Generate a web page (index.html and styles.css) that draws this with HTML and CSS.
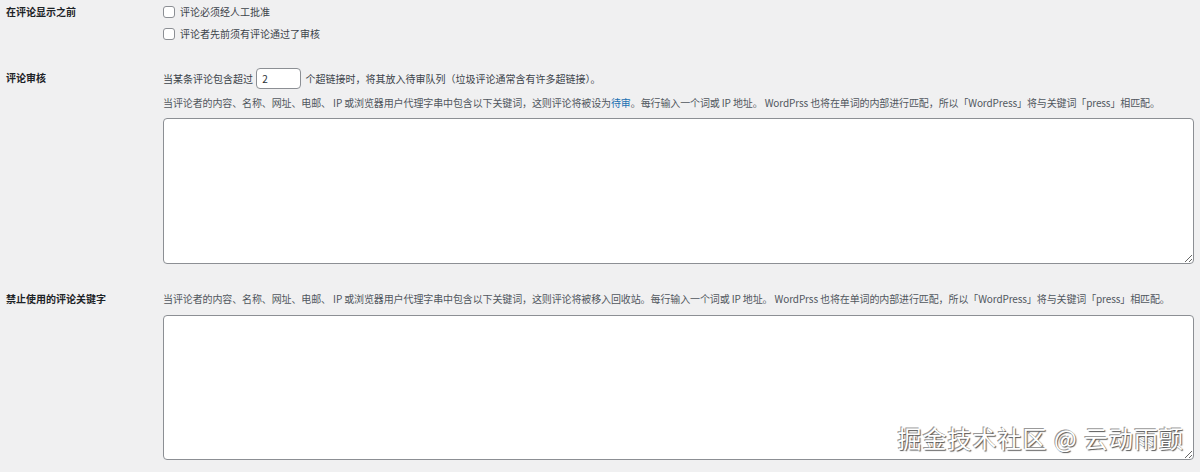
FILE: index.html
```html
<!DOCTYPE html>
<html lang="zh-CN">
<head>
    <meta charset="UTF-8">
    <meta name="viewport" content="width=device-width, initial-scale=1.0">
    <title>讨论设置</title>
    <link rel="stylesheet" href="styles.css">
</head>
<body>
    <div class="settings">
        <div class="row first">
            <div class="row-label">在评论显示之前</div>
            <div class="row-field">
                <label class="check"><input type="checkbox"> 评论必须经人工批准</label>
                <label class="check"><input type="checkbox"> 评论者先前须有评论通过了审核</label>
            </div>
        </div>

        <div class="row moderation">
            <div class="row-label">评论审核</div>
            <div class="row-field">
                <div class="line">当某条评论包含超过 <input type="text" class="small-text" value="2"> 个超链接时，将其放入待审队列（垃圾评论通常含有许多超链接）。</div>
                <p class="description">当评论者的内容、名称、网址、电邮、 IP 或浏览器用户代理字串中包含以下关键词，这则评论将被设为<a href="#">待审</a>。每行输入一个词或 IP 地址。 WordPrss 也将在单词的内部进行匹配，所以「WordPress」将与关键词「press」相匹配。</p>
                <textarea class="keys"></textarea>
            </div>
        </div>

        <div class="row disallowed">
            <div class="row-label">禁止使用的评论关键字</div>
            <div class="row-field">
                <p class="description">当评论者的内容、名称、网址、电邮、 IP 或浏览器用户代理字串中包含以下关键词，这则评论将被移入回收站。每行输入一个词或 IP 地址。 WordPrss 也将在单词的内部进行匹配，所以「WordPress」将与关键词「press」相匹配。</p>
                <textarea class="keys keys-last"></textarea>
            </div>
        </div>
    </div>

    <div class="watermark">掘金技术社区 @ 云动雨颤</div>
</body>
</html>
```

FILE: styles.css
```css
body {
    font-family: "Noto Sans CJK SC", "Noto Sans", sans-serif;
    font-size: 10px;
    color: #3c434a;
    background-color: #f0f0f1;
    margin: 0;
    padding: 0;
    position: relative;
    height: 472px;
    overflow: hidden;
}

.settings {
    padding-top: 1px;
}

.row {
    display: grid;
    grid-template-columns: 157px 1fr;
    padding-left: 6px;
    padding-right: 6px;
}

.moderation {
    margin-top: 22px;
}

.disallowed {
    margin-top: 24px;
}

.row-label {
    font-weight: bold;
    color: #1d2327;
    line-height: 22px;
}

.row-field {
    display: flex;
    flex-direction: column;
}

.check {
    display: flex;
    align-items: center;
    gap: 5px;
    line-height: 22px;
}

.check input {
    appearance: none;
    width: 12px;
    height: 12px;
    margin: 0;
    border: 1px solid #8c8f94;
    border-radius: 3px;
    background-color: #fff;
}

.line {
    display: flex;
    align-items: center;
    height: 22px;
    white-space: pre;
}

.small-text {
    width: 45px;
    height: 21px;
    box-sizing: border-box;
    margin: 0 2px 0 1px;
    padding: 0 5px;
    border: 1px solid #8c8f94;
    border-radius: 4px;
    font-family: inherit;
    font-size: 10px;
    color: #2c3338;
}

.description {
    margin: 3px 0 0;
    line-height: 22px;
    color: #50575e;
    white-space: nowrap;
    letter-spacing: -0.12px;
}

.disallowed .description {
    margin-top: 0;
}

.description a {
    color: #2271b1;
    text-decoration: none;
}

.keys {
    display: block;
    width: 100%;
    height: 146px;
    box-sizing: border-box;
    margin-top: 4px;
    border: 1px solid #8c8f94;
    border-radius: 4px;
    background-color: #fff;
}

.keys-last {
    height: 145px;
    margin-top: 5px;
}

.watermark {
    position: absolute;
    right: 16px;
    bottom: 17px;
    font-size: 24px;
    color: #fff;
    letter-spacing: 1px;
    text-shadow: 1px 1px 1px #555, -1px -1px 0 #999;
}
```
